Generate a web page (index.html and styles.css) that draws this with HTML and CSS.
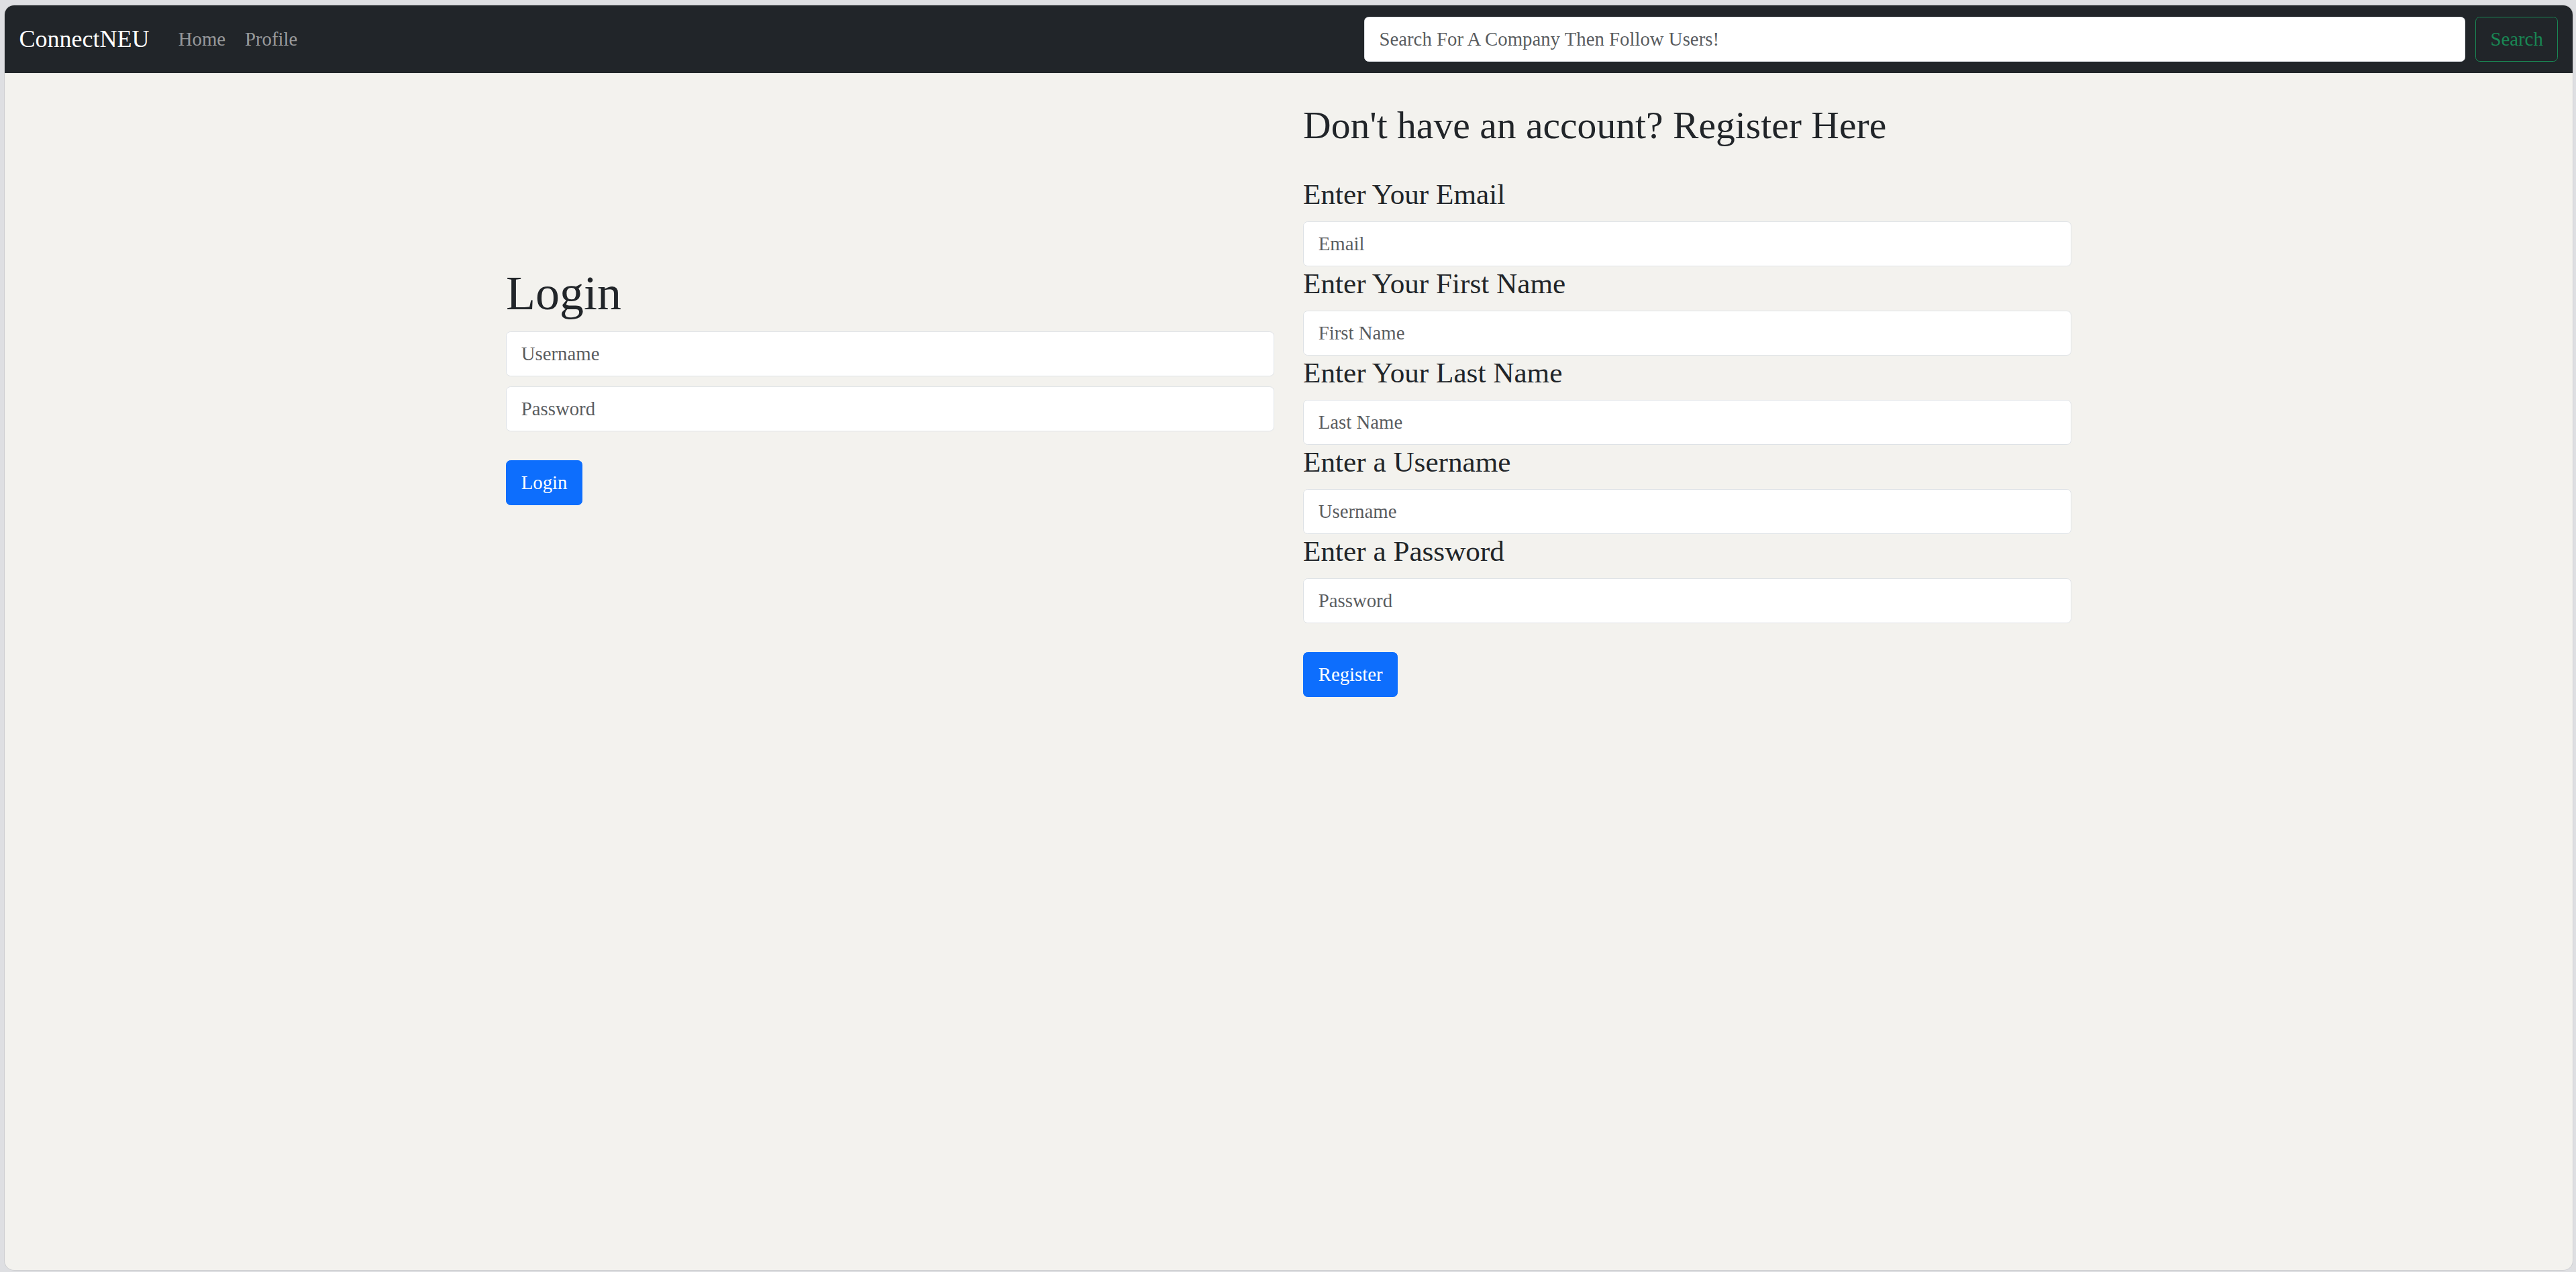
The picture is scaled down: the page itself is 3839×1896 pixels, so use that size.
FILE: index.html
```html
<!DOCTYPE html>
<html lang="en">
<head>
<meta charset="utf-8">
<title>ConnectNEU</title>
<link rel="stylesheet" href="styles.css">
</head>
<body>
<div class="window">
  <nav class="navbar">
    <a class="brand" href="#">ConnectNEU</a>
    <ul class="nav-links">
      <li><a class="nav-link" href="#">Home</a></li>
      <li><a class="nav-link" href="#">Profile</a></li>
    </ul>
    <form class="search">
      <input class="form-control search-input" type="search" placeholder="Search For A Company Then Follow Users!">
      <button class="btn btn-outline-success" type="button">Search</button>
    </form>
  </nav>
  <main class="container">
    <div class="row">
      <section class="col col-login">
        <h1 class="title-login">Login</h1>
        <input class="form-control field" type="text" placeholder="Username">
        <input class="form-control field field-last" type="password" placeholder="Password">
        <button class="btn btn-primary" type="button">Login</button>
      </section>
      <section class="col col-register">
        <h2 class="title-register">Don't have an account? Register Here</h2>
        <h4 class="label">Enter Your Email</h4>
        <input class="form-control" type="email" placeholder="Email">
        <h4 class="label">Enter Your First Name</h4>
        <input class="form-control" type="text" placeholder="First Name">
        <h4 class="label">Enter Your Last Name</h4>
        <input class="form-control" type="text" placeholder="Last Name">
        <h4 class="label">Enter a Username</h4>
        <input class="form-control" type="text" placeholder="Username">
        <h4 class="label">Enter a Password</h4>
        <input class="form-control field-last" type="password" placeholder="Password">
        <button class="btn btn-primary" type="button">Register</button>
      </section>
    </div>
  </main>
</div>
</body>
</html>
```
FILE: styles.css
```css
html {
  font-size: 28.8px;
}

* {
  box-sizing: border-box;
}

body {
  margin: 0;
  padding: 8px 5px 3px 7px;
  background: #dedfe2;
  font-family: "Liberation Serif", "Times New Roman", serif;
  color: #212529;
  line-height: 1.5;
}

.window {
  height: 1885px;
  background: #f3f2ee;
  border-radius: 14px;
  overflow: hidden;
  box-shadow: 0 0 0 1px rgba(0, 0, 0, 0.07);
}

/* Navbar */
.navbar {
  display: flex;
  align-items: center;
  padding: 14.4px 21.6px;
  background: #212529;
}

.brand {
  font-size: 36px;
  line-height: 1.5;
  padding: 9px 0;
  margin-right: 28.8px;
  color: #fff;
  text-decoration: none;
  white-space: nowrap;
}

.nav-links {
  display: flex;
  list-style: none;
  margin: 0 auto 0 0;
  padding: 0;
}

.nav-link {
  display: block;
  padding: 14.4px;
  font-size: 28.8px;
  line-height: 1.5;
  color: rgba(255, 255, 255, 0.55);
  text-decoration: none;
}

.search {
  display: flex;
  margin: 0;
}

/* Form controls */
.form-control {
  display: block;
  width: 100%;
  padding: 10.8px 21.6px;
  font: inherit;
  font-size: 28.8px;
  line-height: 1.5;
  color: #212529;
  background: #fff;
  border: 1px solid #dee2e6;
  border-radius: 6.75px;
  outline: none;
}

.form-control::placeholder {
  color: rgba(33, 37, 41, 0.75);
  opacity: 1;
}

.search-input {
  width: 1641px;
  margin-right: 15px;
}

.btn {
  display: inline-block;
  padding: 10.8px 21.6px;
  font: inherit;
  font-size: 28.8px;
  line-height: 1.5;
  border: 1px solid transparent;
  border-radius: 6.75px;
  white-space: nowrap;
  cursor: pointer;
}

.btn-outline-success {
  color: #198754;
  background: transparent;
  border-color: #198754;
}

.btn-primary {
  color: #fff;
  background: #0d6efd;
  border-color: #0d6efd;
}

/* Main layout */
.container {
  width: 2376px;
  margin: 0 auto;
  padding: 43px 21.6px 0;
}

.row {
  display: flex;
  align-items: center;
  gap: 43.2px;
}

.col {
  flex: 1 1 0;
  min-width: 0;
}

.col-login {
  padding-bottom: 44px;
}

.title-login {
  margin: 0 0 14.4px;
  font-size: 72px;
  font-weight: 400;
  line-height: 1.2;
}

.field {
  margin-bottom: 15px;
}

.field-last {
  margin-bottom: 43.2px;
}

.title-register {
  margin: 0 0 43px;
  font-size: 57.6px;
  font-weight: 400;
  line-height: 1.2;
}

.label {
  margin: 0 0 14.4px;
  font-size: 43.2px;
  font-weight: 400;
  line-height: 1.2;
}
```
